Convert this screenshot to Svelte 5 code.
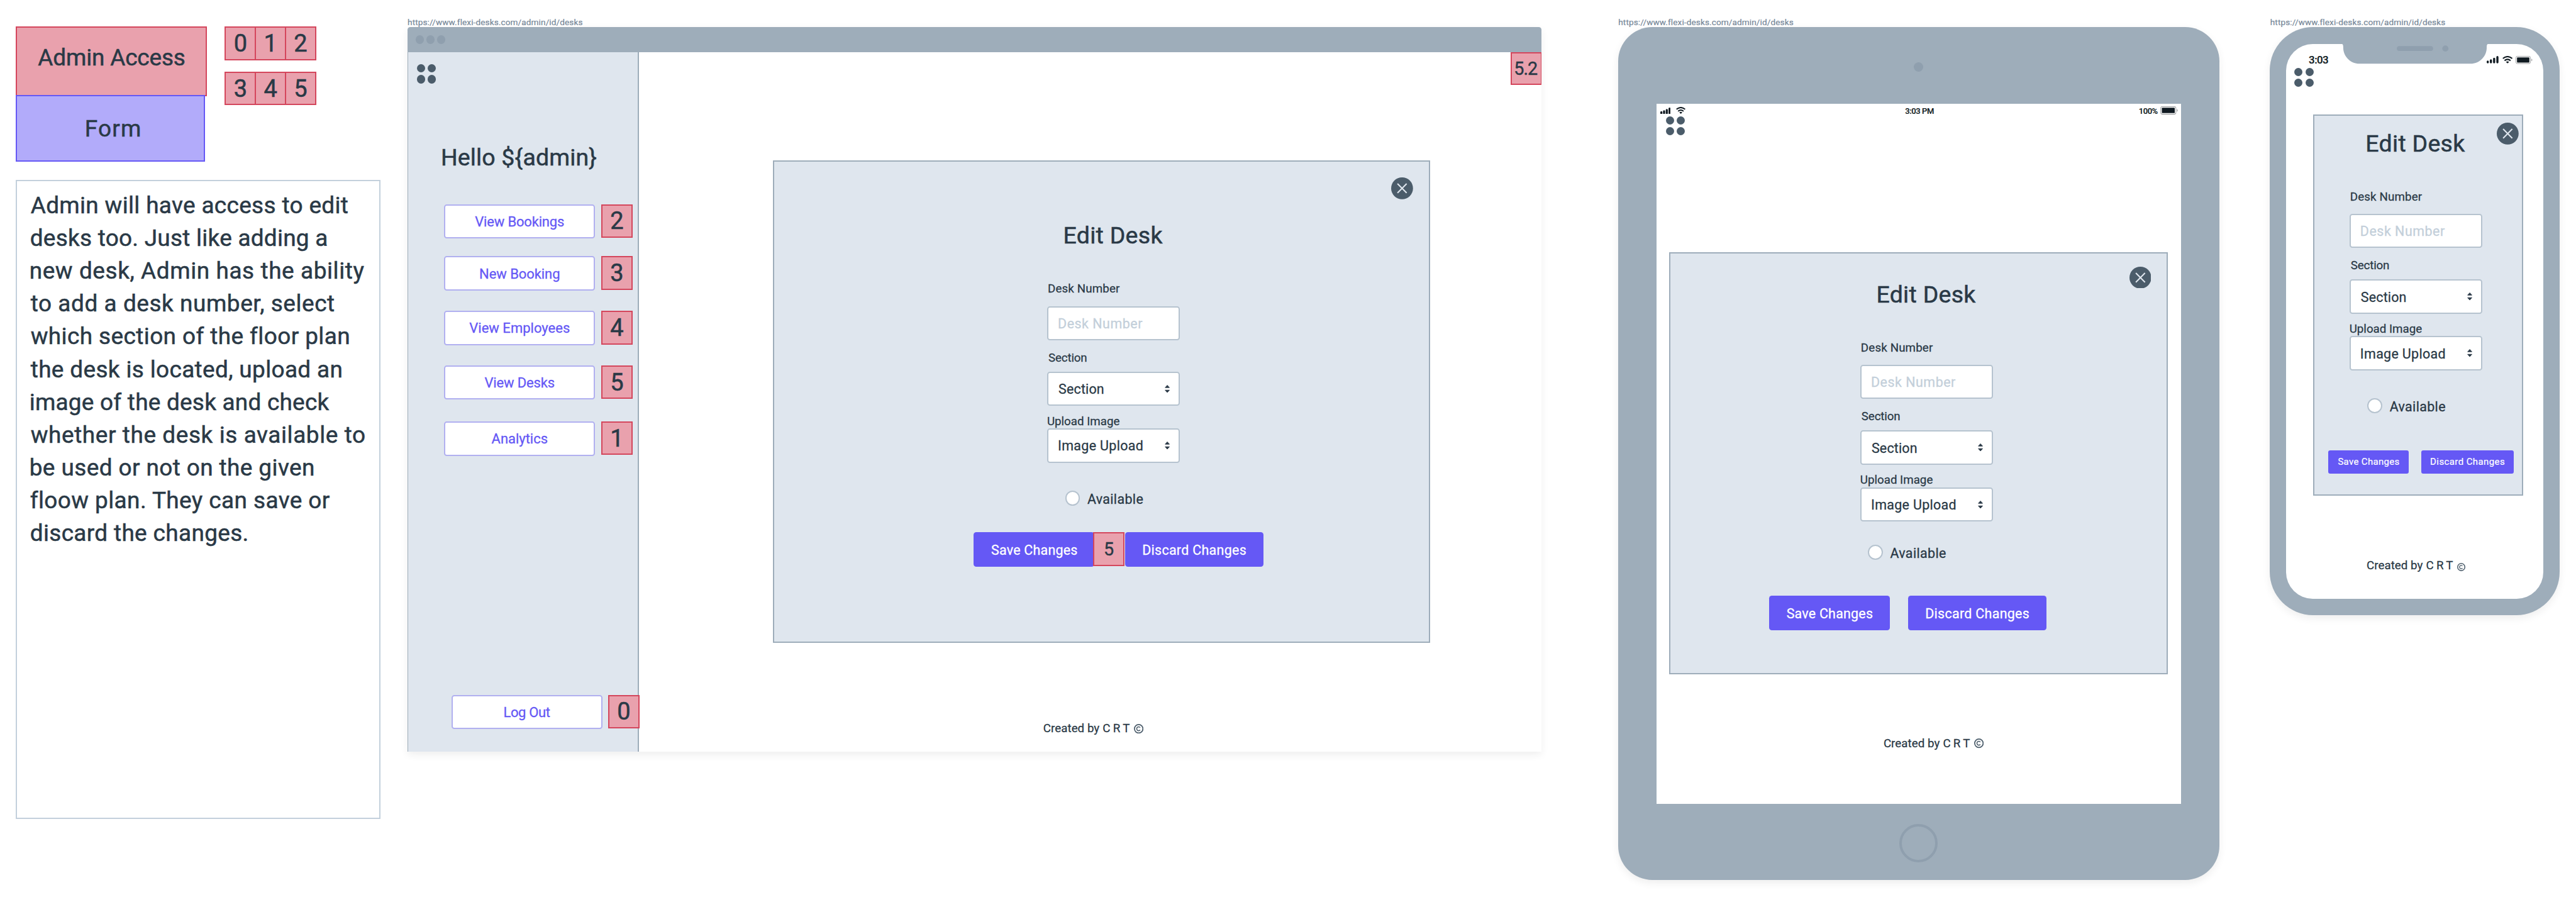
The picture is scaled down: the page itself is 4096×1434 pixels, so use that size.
<script>
  // Layout unit: 1rem is 100 design units, so 0.46rem is 46 units.
  const UNIT = 0.543236;

  const noteLines = [
    ['Admin will have access to edit', 928],
    ['desks too. Just like adding a', 868],
    ['new desk, Admin has the ability', 977],
    ['to add a desk number, select', 888],
    ['which section of the floor plan', 929],
    ['the desk is located, upload an', 909],
    ['image of the desk and check', 874],
    ['whether the desk is available to', 978],
    ['be used or not on the given', 827],
    ['floow plan. They can save or', 873],
    ['discard the changes.', 633]
  ];

  const legend = [['0', '1', '2'], ['3', '4', '5']];

  const menu = [
    { label: 'View Bookings', width: 261, tag: '2' },
    { label: 'New Booking', width: 232, tag: '3' },
    { label: 'View Employees', width: 294, tag: '4' },
    { label: 'View Desks', width: 205, tag: '5' },
    { label: 'Analytics', width: 164, tag: '1' }
  ];

  const url = 'https://www.flexi-desks.com/admin/id/desks';

  const pen = document.createElement('canvas').getContext('2d');

  // Tracks a line of text so that its ink spans exactly `units` design units.
  function fit(node, units) {
    const style = getComputedStyle(node);
    const text = node.textContent;
    pen.font = `${style.fontWeight} ${style.fontSize} ${style.fontFamily}`;
    const m = pen.measureText(text);
    const left = m.actualBoundingBoxLeft;
    const rightGap = m.width - m.actualBoundingBoxRight;
    const ink = node.getBoundingClientRect().width + left - rightGap;
    const tracking = (units * UNIT - ink) / (text.length - 1);
    node.style.letterSpacing = `${tracking}px`;
    node.style.marginLeft = `${left}px`;
    node.style.marginRight = `${-(rightGap + tracking)}px`;
  }
</script>

{#snippet t(text, width)}<span class="t" use:fit={width}>{text}</span>{/snippet}

{#snippet apps()}
  <div class="apps"><i></i><i></i><i></i><i></i></div>
{/snippet}

{#snippet wifi()}
  <svg class="wifi" viewBox="0 0 30 22">
    <path d="M1.4 7.4Q15 -3.6 28.6 7.4" fill="none" stroke="currentColor" stroke-width="3.9" />
    <path d="M6.3 13.6Q15 6.2 23.7 13.6" fill="none" stroke="currentColor" stroke-width="3.7" />
    <path d="M15 21.6L10.8 17.8Q10.6 16.8 11.6 16.4Q15 14.6 18.4 16.4Q19.4 16.8 19.2 17.8Z" fill="currentColor" />
  </svg>
{/snippet}

{#snippet battery()}
  <svg class="battery" viewBox="0 0 50 24">
    <rect x=".9" y=".9" width="42.4" height="21.4" rx="4" fill="none" stroke="#9d9fa1" stroke-width="1.8" />
    <rect x="4" y="4" width="36.2" height="15.2" rx="1.6" fill="currentColor" />
    <path d="M46 7.4Q48.6 9 48.6 11.6Q48.6 14.2 46 15.8Z" fill="#9d9fa1" />
  </svg>
{/snippet}

{#snippet credit()}
  <div class="credit">
    {@render t('Created by', 163)}
    {@render t('C R T', 77)}
    <svg class="copy" viewBox="0 0 28 28">
      <circle cx="14" cy="14" r="12.4" fill="none" stroke="#4d5e6c" stroke-width="3.2" />
      <path d="M18.2 10.6A5.6 5.6 0 1 0 18.2 17.4" fill="none" stroke="#4d5e6c" stroke-width="2.8" />
    </svg>
  </div>
{/snippet}

{#snippet select(text, width)}
  <div class="field">
    {@render t(text, width)}
    <svg class="arrows" viewBox="0 0 15 23">
      <path d="M7.5 .8L13.8 7.8H1.2Z M7.5 22.2L13.8 15.2H1.2Z" fill="currentColor" stroke="currentColor" stroke-width="1.6" stroke-linejoin="round" />
    </svg>
  </div>
{/snippet}

{#snippet form(kind)}
  <div class="modal {kind}">
    <svg class="close" viewBox="0 0 64 64">
      <circle cx="32" cy="32" r="32" fill="#4b5c6a" />
      <path d="M18.6 18.6L45.4 45.4M45.4 18.6L18.6 45.4" stroke="#dfe6ee" stroke-width="3.8" />
    </svg>
    <div class="form">
      <div class="title">{@render t('Edit Desk', 285)}</div>
      <div class="label l1">{@render t('Desk Number', 210)}</div>
      <div class="field hint">{@render t('Desk Number', 245)}</div>
      <div class="label l2">{@render t('Section', 113)}</div>
      {@render select('Section', 132)}
      <div class="label l3">{@render t('Upload Image', 211)}</div>
      {@render select('Image Upload', 246)}
      <div class="option">
        <span class="radio"></span>
        <div class="option-text">{@render t('Available', 163)}</div>
      </div>
      <div class="actions">
        <div class="btn save">{@render t('Save Changes', kind === 'small' ? 179 : 251)}</div>
        {#if kind === 'wide'}<div class="tag between">5</div>{/if}
        <div class="btn discard">{@render t('Discard Changes', kind === 'small' ? 215 : 301)}</div>
      </div>
    </div>
  </div>
{/snippet}

<div class="board">
  <section class="notes">
    <div class="head">
      <div class="kinds">
        <div class="kind access">{@render t('Admin Access', 430)}</div>
        <div class="kind formkind">{@render t('Form', 155)}</div>
      </div>
      <div class="legend">
        {#each legend as row}
          <div class="tags">
            {#each row as n}<div class="tag">{n}</div>{/each}
          </div>
        {/each}
      </div>
    </div>
    <div class="note">
      {#each noteLines as [line, width]}
        <div class="line">{@render t(line, width)}</div>
      {/each}
    </div>
  </section>

  <section class="artboard a-desktop">
    <div class="url">{@render t(url, 512)}</div>
    <div class="desktop">
      <div class="bar"><i></i><i></i><i></i></div>
      <div class="page">
        <aside>
          {@render apps()}
          <div class="hello">{@render t('Hello ${admin}', 450)}</div>
          <nav>
            {#each menu as item}
              <div class="row">
                <div class="link">{@render t(item.label, item.width)}</div>
                <div class="tag">{item.tag}</div>
              </div>
            {/each}
          </nav>
          <div class="row logout">
            <div class="link">{@render t('Log Out', 135)}</div>
            <div class="tag">0</div>
          </div>
        </aside>
        <main>
          <div class="tag corner">{@render t('5.2', 66)}</div>
          {@render form('wide')}
          {@render credit()}
        </main>
      </div>
    </div>
  </section>

  <section class="artboard a-tablet">
    <div class="url">{@render t(url, 512)}</div>
    <div class="tablet">
      <div class="chin top"><span class="camera"></span></div>
      <div class="screen">
        <div class="status">
          <div class="side">
            <svg class="signal" viewBox="0 0 30 20">
              <path d="M3 13.7V16.7M11 10.7V16.7M19 7V16.7M27 3V16.7" stroke="currentColor" stroke-width="6" stroke-linecap="round" />
            </svg>
            {@render wifi()}
          </div>
          {@render t('3:03 PM', 84)}
          <div class="side right">
            {@render t('100%', 55)}
            {@render battery()}
          </div>
        </div>
        {@render apps()}
        {@render form('medium')}
        {@render credit()}
      </div>
      <div class="chin bottom"><span class="home"></span></div>
    </div>
  </section>

  <section class="artboard a-phone">
    <div class="url">{@render t(url, 512)}</div>
    <div class="phone">
      <div class="screen">
        <svg class="notch" viewBox="0 0 438 60">
          <path d="M0 0C6 0 9 3 9 9V12C9 40 32 59.5 56 59.5H382C406 59.5 429 40 429 12V9C429 3 432 0 438 0Z" fill="#9eadba" />
          <rect x="166" y="8" width="106" height="14" rx="7" fill="#8f9fae" />
          <circle cx="308" cy="15" r="9" fill="#8f9fae" />
        </svg>
        <div class="status">
          {@render t('3:03', 57)}
          <svg class="signal" viewBox="0 0 35 22">
            <path d="M3.1 16.6V18.4M12.4 12.8V18.4M21.8 8V18.4M31.4 3.2V18.4" stroke="currentColor" stroke-width="6.2" stroke-linecap="round" />
          </svg>
          {@render wifi()}
          {@render battery()}
        </div>
        {@render apps()}
        {@render form('small')}
        {@render credit()}
      </div>
    </div>
  </section>
</div>

<style>
  :global(html) {
    font-size: 54.3236px;
  }
  :global(body) {
    margin: 0;
    background: #fff;
    overflow: hidden;
  }
  .board,
  .board :global(*) {
    box-sizing: border-box;
  }
  .board {
    display: flex;
    align-items: flex-start;
    width: 75.4rem;
    height: 26.4rem;
    overflow: hidden;
    font-family: Roboto, 'Liberation Sans', sans-serif;
    font-weight: 400;
    color: #2a3946;
  }
  .t {
    display: inline-block;
    flex: none;
    position: relative;
    top: 0.012rem;
    white-space: pre;
    -webkit-text-stroke: 0.014em currentColor;
  }
  svg {
    display: block;
    flex: none;
  }

  /* Numbered tags */
  .tag {
    display: flex;
    align-items: center;
    justify-content: center;
    flex: none;
    width: 0.92rem;
    height: 0.98rem;
    border: 0.04rem solid #d4465c;
    background: #e9a1ad;
    font-size: 0.7rem;
    line-height: 1;
    -webkit-text-stroke: 0.014em currentColor;
  }

  /* Notes column */
  .notes {
    width: 10.68rem;
    margin: 0.78rem 0 0 0.46rem;
  }
  .head {
    display: flex;
  }
  .kind {
    display: flex;
    align-items: center;
    justify-content: center;
    font-size: 0.68rem;
    line-height: 0.8rem;
  }
  .access {
    width: 5.6rem;
    height: 2.04rem;
    padding-bottom: 0.24rem;
    border: 0.04rem solid #d4465c;
    background: #e9a1ad;
  }
  .formkind {
    width: 5.54rem;
    height: 1.96rem;
    margin-top: -0.04rem;
    padding-left: 0.16rem;
    border: 0.04rem solid #6558f5;
    background: #b2abfa;
    position: relative;
  }
  .legend {
    display: flex;
    flex-direction: column;
    gap: 0.34rem;
    margin-left: 0.52rem;
  }
  .tags {
    display: flex;
  }
  .tags .tag + .tag {
    margin-left: -0.04rem;
  }
  .note {
    height: 18.7rem;
    margin-top: 0.53rem;
    padding: 0.22rem 0 0 0.4rem;
    border: 0.04rem solid #c3d0dc;
    font-size: 0.68rem;
  }
  .line {
    display: flex;
    height: 0.96rem;
    line-height: 0.96rem;
  }

  /* Artboards */
  .artboard {
    flex: none;
    padding-top: 0.51rem;
  }
  .a-desktop {
    margin-left: 0.78rem;
  }
  .a-tablet {
    margin-left: 2.24rem;
  }
  .a-phone {
    margin-left: 1.48rem;
  }
  .url {
    display: flex;
    height: 0.29rem;
    padding-left: 0.01rem;
    font-size: 0.25rem;
    line-height: 0.29rem;
    color: #768798;
  }
  .desktop,
  .tablet,
  .phone {
    box-shadow: 0 0.08rem 0.24rem rgba(0, 0, 0, 0.065);
    background: #9eadba;
  }
  .apps {
    display: grid;
    grid-template-columns: 0.24rem 0.24rem;
    gap: 0.08rem;
  }
  .apps i {
    height: 0.24rem;
    border-radius: 50%;
    background: #4b5c6a;
  }

  /* Desktop */
  .desktop {
    display: flex;
    flex-direction: column;
    width: 33.2rem;
    height: 21.2rem;
    border-radius: 0.08rem 0.08rem 0 0;
    overflow: hidden;
  }
  .bar {
    display: flex;
    align-items: center;
    gap: 0.08rem;
    flex: none;
    height: 0.72rem;
    padding-left: 0.24rem;
  }
  .bar i {
    width: 0.24rem;
    height: 0.24rem;
    border-radius: 50%;
    background: #8f9fae;
  }
  .page {
    display: flex;
    flex: 1;
    background: #fff;
  }
  aside {
    width: 6.78rem;
    flex: none;
    padding: 0.36rem 0 0 0.26rem;
    border: solid #9eadba;
    border-width: 0 0.04rem 0 0.02rem;
    background: #dfe6ee;
  }
  .hello {
    display: flex;
    margin: 1.76rem 0 0 0.76rem;
    font-size: 0.69rem;
    line-height: 0.8rem;
  }
  nav {
    margin: 0.98rem 0 0 0.8rem;
  }
  .row {
    display: flex;
    gap: 0.18rem;
  }
  nav .row:nth-child(2) {
    margin-top: 0.52rem;
  }
  nav .row:nth-child(3),
  nav .row:nth-child(4) {
    margin-top: 0.6rem;
  }
  nav .row:nth-child(5) {
    margin-top: 0.64rem;
  }
  aside > .logout {
    position: relative;
    gap: 0.16rem;
    margin: 7rem 0 0 1.02rem;
  }
  .link {
    display: flex;
    align-items: center;
    justify-content: center;
    flex: none;
    width: 4.42rem;
    height: 1rem;
    border: 0.04rem solid #b1b0f0;
    border-radius: 0.08rem;
    background: #fff;
    font-size: 0.405rem;
    line-height: 0.5rem;
    color: #6558f5;
  }
  main {
    flex: 1;
    display: flex;
    flex-direction: column;
  }
  .corner {
    align-self: flex-end;
    height: 0.96rem;
    margin-right: -0.02rem;
    font-size: 0.53rem;
  }
  main > .credit {
    margin: 2.3rem 0 0 11.855rem;
  }

  /* Tablet */
  .tablet {
    width: 17.6rem;
    height: 24.96rem;
    border-radius: 1rem;
  }
  .chin {
    display: flex;
    align-items: center;
    justify-content: center;
    height: 2.24rem;
    padding-top: 0.08rem;
  }
  .camera {
    width: 0.28rem;
    height: 0.28rem;
    border-radius: 50%;
    background: #8f9fae;
  }
  .home {
    width: 1.12rem;
    height: 1.12rem;
    border: 0.08rem solid #8f9fae;
    border-radius: 50%;
  }
  .tablet .screen {
    width: 15.36rem;
    height: 20.48rem;
    margin: 0 auto;
    background: #fff;
  }
  .status {
    display: flex;
    align-items: center;
    font-weight: 500;
    color: #101a21;
  }
  .tablet .status {
    display: grid;
    grid-template-columns: 1fr auto 1fr;
    height: 0.36rem;
    padding: 0.04rem 0.07rem 0 0.12rem;
    font-size: 0.24rem;
    line-height: 0.32rem;
  }
  .side {
    display: flex;
    align-items: center;
    gap: 0.15rem;
  }
  .side.right {
    justify-content: flex-end;
    gap: 0.07rem;
  }
  .tablet .signal {
    width: 0.3rem;
    height: 0.2rem;
  }
  .wifi {
    width: 0.3rem;
    height: 0.22rem;
  }
  .tablet .wifi {
    width: 0.28rem;
    height: 0.205rem;
  }
  .battery {
    width: 0.5rem;
    height: 0.24rem;
  }
  .tablet .battery {
    width: 0.53rem;
    height: 0.25rem;
  }
  .tablet .apps {
    width: 0.56rem;
    margin-left: 0.28rem;
  }
  .tablet .credit {
    margin: 1.83rem 0 0 6.67rem;
  }

  /* Phone */
  .phone {
    width: 8.48rem;
    height: 17.2rem;
    padding: 0.48rem;
    border-radius: 1.27rem;
  }
  .phone .screen {
    position: relative;
    height: 16.24rem;
    border-radius: 0.78rem;
    background: #fff;
  }
  .notch {
    position: absolute;
    left: 1.57rem;
    top: -0.01rem;
    width: 4.38rem;
    height: 0.6rem;
  }
  .phone .status {
    height: 0.7rem;
    padding: 0.24rem 0 0 0.66rem;
    font-size: 0.31rem;
    line-height: 0.46rem;
  }
  .phone .signal {
    width: 0.35rem;
    height: 0.22rem;
    margin: 0 0.1rem 0 4.64rem;
  }
  .phone .battery {
    margin-left: 0.1rem;
  }
  .phone .apps {
    margin-left: 0.24rem;
  }
  .phone .credit {
    margin: 1.86rem 0 0 2.37rem;
  }

  .credit {
    display: flex;
    align-items: center;
    font-size: 0.345rem;
    line-height: 0.4rem;
  }
  .credit .t + .t {
    left: 0.11rem;
  }
  .copy {
    width: 0.28rem;
    height: 0.28rem;
    margin-left: 0.24rem;
  }
  .phone .copy {
    width: 0.24rem;
    height: 0.24rem;
    margin: 0.08rem 0 0 0.23rem;
  }

  /* Edit form */
  .modal {
    position: relative;
    flex: none;
    border: 0.04rem solid #9eadba;
    background: #dfe6ee;
  }
  .wide {
    width: 19.24rem;
    height: 14.12rem;
    margin: 2.22rem 0 0 3.92rem;
    padding: 1.754rem 0 0 8rem;
  }
  .medium {
    width: 14.6rem;
    height: 12.35rem;
    margin: 3.42rem 0 0 0.38rem;
    padding: 0.794rem 0 0 5.56rem;
  }
  .small {
    width: 6.16rem;
    height: 11.14rem;
    margin: 0.82rem 0 0 0.78rem;
    padding: 0.394rem 0 0 1.04rem;
  }
  .close {
    position: absolute;
    top: 0.46rem;
    right: 0.46rem;
    width: 0.64rem;
    height: 0.64rem;
  }
  .medium .close {
    top: 0.38rem;
  }
  .small .close {
    top: 0.2rem;
    right: 0.1rem;
  }
  .form {
    width: 3.88rem;
  }
  .title {
    display: flex;
    padding-left: 0.52rem;
    font-size: 0.69rem;
    line-height: 0.8rem;
  }
  .label {
    display: flex;
    padding-left: 0.03rem;
    font-size: 0.345rem;
    line-height: 0.4rem;
  }
  .l1 {
    margin: 0.97rem 0 0.3rem;
  }
  .l2 {
    margin: 0.32rem 0 0.2rem;
  }
  .l3 {
    margin: 0.25rem 0 0.01rem;
    padding-left: 0.01rem;
  }
  .field {
    display: flex;
    align-items: center;
    justify-content: space-between;
    height: 1rem;
    padding: 0 0.26rem 0 0.29rem;
    border: 0.04rem solid #b6c3cf;
    border-radius: 0.08rem;
    background: #fff;
    font-size: 0.395rem;
    line-height: 0.5rem;
  }
  .hint {
    color: #c3cfda;
  }
  .arrows {
    width: 0.15rem;
    height: 0.23rem;
  }
  .option {
    display: flex;
    align-items: center;
    gap: 0.21rem;
    height: 0.44rem;
    margin: 0.82rem 0 0 0.52rem;
    font-size: 0.395rem;
    line-height: 0.44rem;
  }
  .option-text {
    display: flex;
    padding-top: 0.05rem;
  }
  .radio {
    width: 0.44rem;
    height: 0.44rem;
    border: 0.04rem solid #b6c3cf;
    border-radius: 50%;
    background: #fff;
  }
  .actions {
    display: flex;
    width: max-content;
    margin: 0.78rem 0 0 -2.16rem;
  }
  .btn {
    display: flex;
    align-items: center;
    justify-content: center;
    width: 3.54rem;
    height: 1rem;
    border-radius: 0.08rem;
    background: #6558f5;
    font-size: 0.395rem;
    line-height: 0.5rem;
    color: #fff;
  }
  .discard {
    width: 4.04rem;
  }
  .between {
    margin: 0 0.02rem 0 -0.04rem;
    font-size: 0.53rem;
  }
  .medium .option {
    margin: 0.69rem 0 0 0.22rem;
  }
  .medium .actions {
    gap: 0.54rem;
    margin: 1.05rem 0 0 -2.68rem;
  }
  .small .actions {
    gap: 0.38rem;
    margin: 1.08rem 0 0 -0.62rem;
  }
  .small .btn {
    width: 2.34rem;
    height: 0.68rem;
    border-radius: 0.06rem;
    font-size: 0.275rem;
  }
  .small .discard {
    width: 2.7rem;
  }
</style>
